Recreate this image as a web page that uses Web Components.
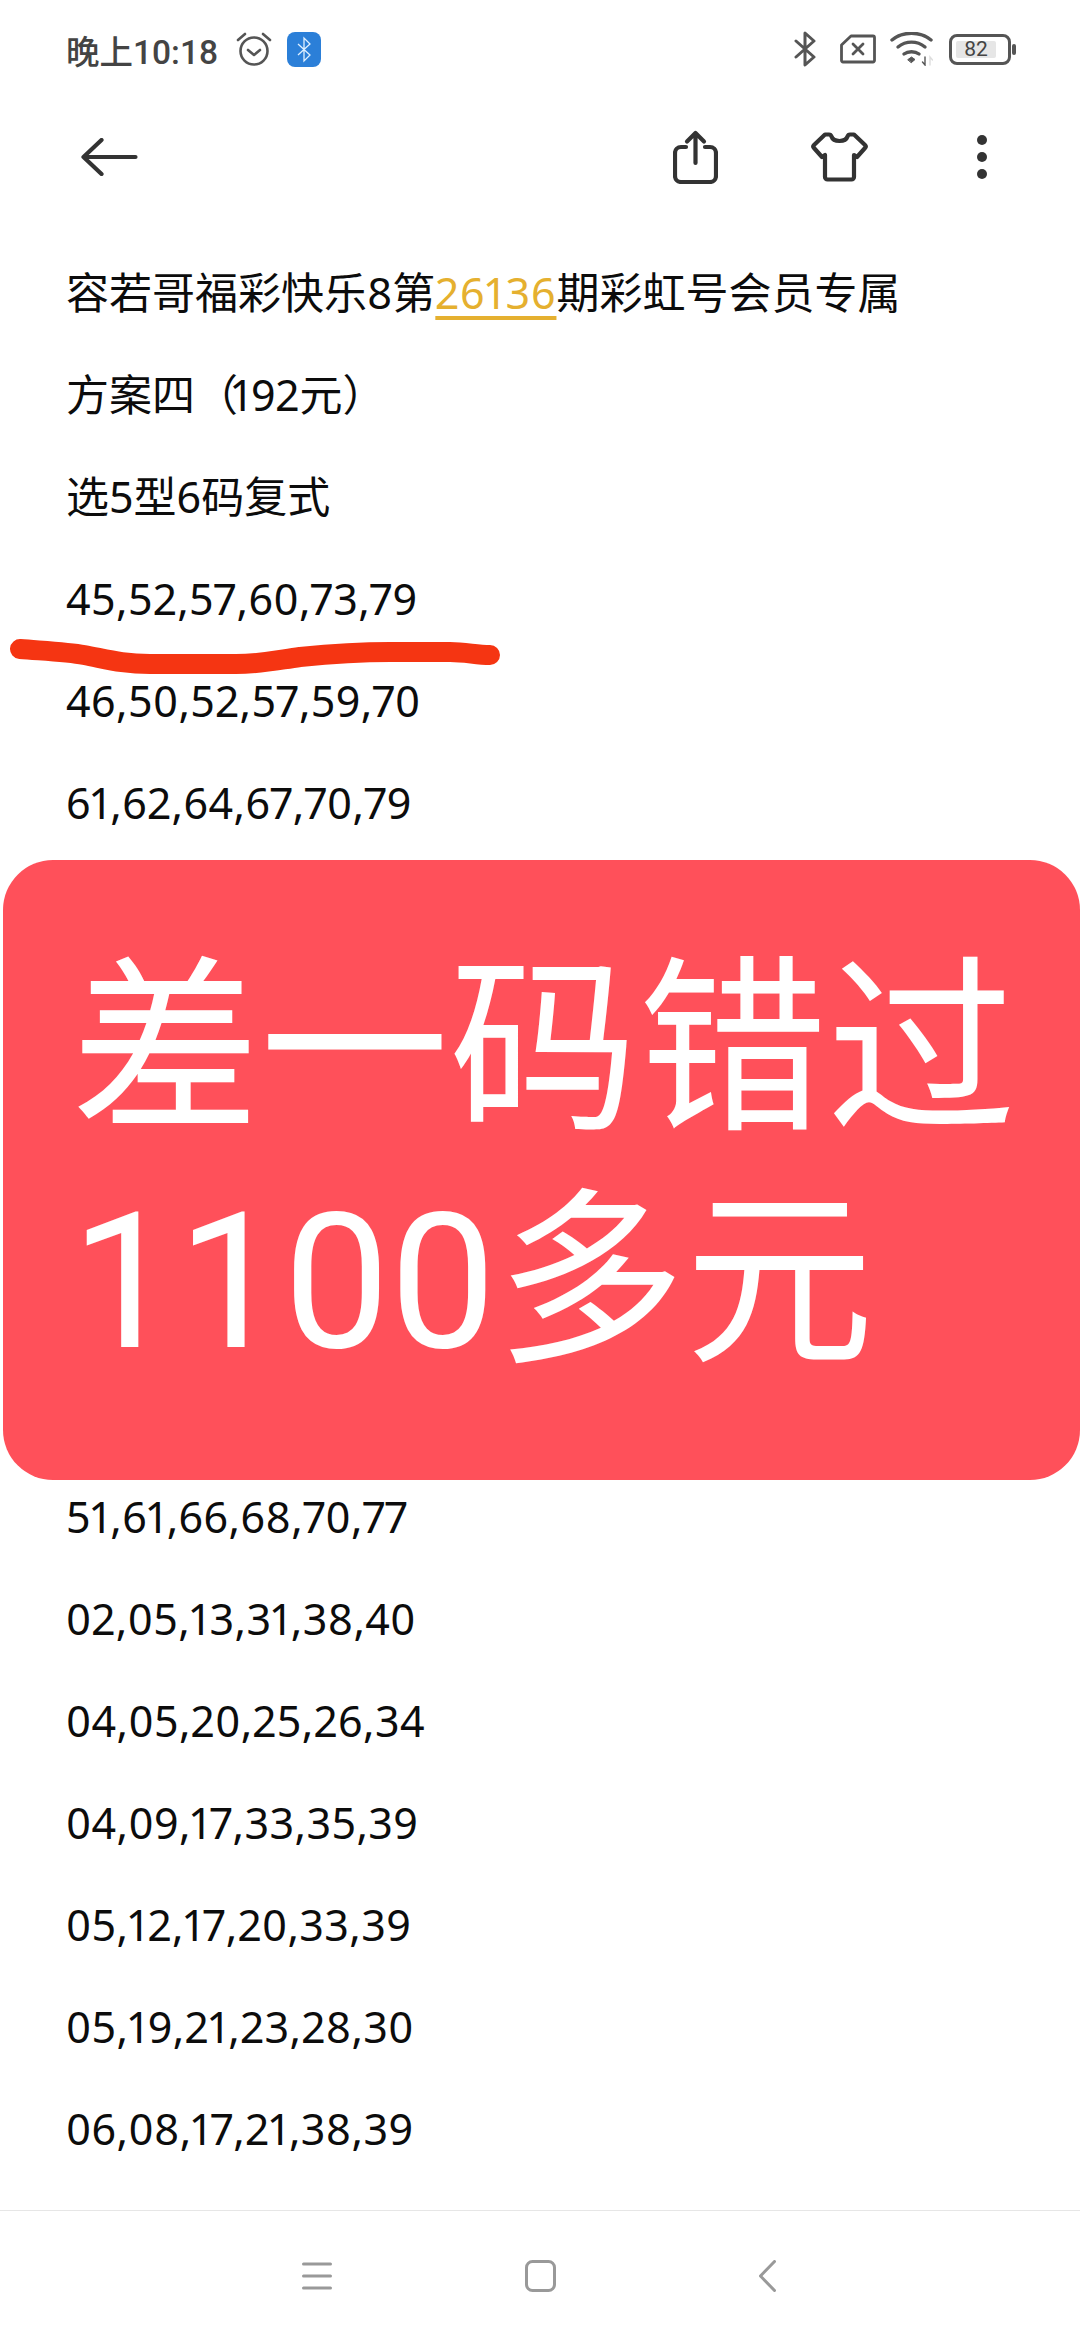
<!DOCTYPE html>
<html lang="zh">
<head>
<meta charset="utf-8">
<style>
    html, body { margin: 0; padding: 0; background: #fff; }
    body { width: 1080px; height: 2340px; overflow: hidden; position: relative; }
    note-page { height: 2340px; }
</style>
</head>
<body>
<note-page>
    <status-bar></status-bar>
    <tool-bar></tool-bar>
    <note-line>容若哥福彩快乐8第<a>26136</a>期彩虹号会员专属</note-line>
    <note-line>方案四<span>（</span>192元）</note-line>
    <note-line>选5型6码复式</note-line>
    <note-line num>45,52,57,60,73,79</note-line>
    <note-line num>46,50,52,57,59,70</note-line>
    <note-line num>61,62,64,67,70,79</note-line>
    <note-line></note-line>
    <note-line></note-line>
    <note-line></note-line>
    <note-line></note-line>
    <note-line></note-line>
    <note-line></note-line>
    <note-line num>51,61,66,68,70,77</note-line>
    <note-line num>02,05,13,31,38,40</note-line>
    <note-line num>04,05,20,25,26,34</note-line>
    <note-line num>04,09,17,33,35,39</note-line>
    <note-line num>05,12,17,20,33,39</note-line>
    <note-line num>05,19,21,23,28,30</note-line>
    <note-line num>06,08,17,21,38,39</note-line>
    <nav-bar></nav-bar>
    <red-stroke></red-stroke>
    <promo-banner>
        <span>差一码错过</span>
        <span>1100多元</span>
    </promo-banner>
</note-page>

<script>
class NotePage extends HTMLElement{
    constructor(){
        super();
        this.shadow = this.attachShadow({mode: "open"});
    }
    connectedCallback(){
        this.shadow.innerHTML = `
            <style>
                :host { display: flex; flex-direction: column; position: relative; width: 1080px; }
            </style>
            <slot></slot>
        `;
    }
}

class StatusBar extends HTMLElement{
    constructor(){
        super();
        this.shadow = this.attachShadow({mode: "open"});
    }
    connectedCallback(){
        this.shadow.innerHTML = `
            <style>
                :host {
                    display: flex;
                    align-items: center;
                    height: 98px;
                    padding: 0 0 0 66px;
                    color: #444;
                    font-family: Roboto, "Noto Sans CJK SC", sans-serif;
                    font-size: 33.5px;
                    font-weight: 500;
                }
                svg { display: block; flex: none; }
                #time { white-space: nowrap; }
                #alarm { margin-left: 18px; }
                #bt-app { margin-left: 15px; }
                #right { margin-left: auto; margin-right: 64px; display: flex; align-items: center; }
                #sim { margin-left: 24px; }
                #wifi { margin-left: 14px; }
                #battery { margin-left: 16px; }
            </style>
            <span id="time">晚上10:18</span>
            <svg id="alarm" width="36" height="36" viewBox="0 0 36 36" fill="none" stroke="#555" stroke-width="2.6" stroke-linecap="round" stroke-linejoin="round">
                <circle cx="18" cy="20" r="13.500"/>
                <path d="M12 19l6 5 6-5"/>
                <path d="M2 9 9 3M34 9l-7-6"/>
            </svg>
            <svg id="bt-app" width="34" height="35" viewBox="0 0 34 35">
                <rect width="34" height="35" rx="8" fill="#2b7fd8"/>
                <path d="M11 12l12 11-6 6V6l6 6-12 11" fill="none" stroke="#dff0ff" stroke-width="1.3"/>
            </svg>
            <div id="right">
                <svg width="22" height="36" viewBox="0 0 22 36" fill="none" stroke="#555" stroke-width="3" stroke-linejoin="round" stroke-linecap="round">
                    <path d="M2 10l18 16-9 8V2l9 8L2 26"/>
                </svg>
                <svg id="sim" width="36" height="30" viewBox="0 0 36 30" fill="none" stroke="#555" stroke-width="2.8" stroke-linejoin="round" stroke-linecap="round">
                    <path d="M11 2h22a1.500 1.500 0 0 1 1.500 1.500v23a1.500 1.500 0 0 1-1.500 1.500H3a1.500 1.500 0 0 1-1.500-1.500V11z"/>
                    <path d="M13 10l10 10M23 10L13 20"/>
                </svg>
                <svg id="wifi" width="43" height="34" viewBox="0 0 43 34" fill="none" stroke="#555" stroke-width="3.4" stroke-linecap="round">
                    <path d="M2 8c11-9 28-9 39 0"/>
                    <path d="M8 15c8-6.500 19-6.500 27 0"/>
                    <path d="M14 22c4-3 11-3 15 0"/>
                    <path d="M18 27.500 21.500 25l3.500 2.500-3.500 3z" fill="#555" stroke-width="1"/>
                    <path d="M35 25v8l-2.500-3" stroke-width="1.4"/>
                    <path d="M40 33v-8l2.500 3" stroke="#ddd" stroke-width="1.4"/>
                </svg>
                <bat-level id="battery">82</bat-level>
            </div>
        `;
    }
}

class BatLevel extends HTMLElement{
    constructor(){
        super();
        this.shadow = this.attachShadow({mode: "open"});
    }
    connectedCallback(){
        this.shadow.innerHTML = `
            <style>
                :host { display: flex; align-items: center; gap: 1px; }
                #shell {
                    box-sizing: border-box;
                    width: 62px;
                    height: 31px;
                    border: 3px solid #555;
                    border-radius: 8px;
                    padding: 4px 12px 4px 4px;
                    display: flex;
                }
                #fill {
                    flex: 1;
                    background: #e6e6e6;
                    border-radius: 2px;
                    display: flex;
                    align-items: center;
                    justify-content: center;
                    color: #444;
                    font: 400 21px/1 Roboto, sans-serif;
                }
                #cap { width: 4px; height: 11px; background: #555; border-radius: 2px; }
            </style>
            <div id="shell"><div id="fill"><slot></slot></div></div>
            <div id="cap"></div>
        `;
    }
}

class ToolBar extends HTMLElement{
    constructor(){
        super();
        this.shadow = this.attachShadow({mode: "open"});
    }
    connectedCallback(){
        this.shadow.innerHTML = `
            <style>
                :host {
                    display: flex;
                    align-items: center;
                    box-sizing: border-box;
                    height: 144px;
                    padding: 0 93px 26px 81px;
                }
                svg { display: block; flex: none; }
                #share { margin-left: auto; }
                #shirt { margin-left: 93px; }
                #more { margin-left: 109px; }
            </style>
            <svg width="57" height="38" viewBox="0 0 57 38" fill="none" stroke="#333" stroke-width="4.200" stroke-linecap="round" stroke-linejoin="round">
                <path d="M2.500 19h52M20.500 2 2.500 19l18 17"/>
            </svg>
            <svg id="share" width="45" height="54" viewBox="0 0 45 54" fill="none" stroke="#333" stroke-width="4.200" stroke-linecap="round" stroke-linejoin="round">
                <path d="M13 17H8a6 6 0 0 0-6 6v23a6 6 0 0 0 6 6h29a6 6 0 0 0 6-6V23a6 6 0 0 0-6-6h-5"/>
                <path d="M22.500 33V3M14 11.500l8.500-8.500 8.500 8.500"/>
            </svg>
            <svg id="shirt" width="57" height="50" viewBox="0 0 57 50" fill="none" stroke="#333" stroke-width="4.200" stroke-linecap="round" stroke-linejoin="round">
                <path d="M18 2.500h-4L3 13c-1 1-1 2 0 3l8 9 3-2v22a2.500 2.500 0 0 0 2.500 2.500h24a2.500 2.500 0 0 0 2.500-2.500V23l3 2 8-9c1-1 1-2 0-3L43 2.500h-4c-1 0-2 .5-2.500 2-1 3-3.500 4.500-8 4.500s-7-1.500-8-4.500c-.5-1.500-1.500-2-2.500-2z"/>
            </svg>
            <svg id="more" width="10" height="44" viewBox="0 0 10 44" fill="#333">
                <circle cx="5" cy="5" r="5"/>
                <circle cx="5" cy="22" r="5"/>
                <circle cx="5" cy="39" r="5"/>
            </svg>
        `;
    }
}

class NoteLine extends HTMLElement{
    constructor(){
        super();
        this.shadow = this.attachShadow({mode: "open"});
    }
    connectedCallback(){
        this.shadow.innerHTML = `
            <style>
                :host {
                    display: block;
                    height: 102px;
                    padding-left: 66px;
                    color: #0c0c0c;
                    font-family: "Noto Sans", "Noto Sans CJK SC", sans-serif;
                    font-size: 43px;
                    line-height: 102px;
                    white-space: nowrap;
                    font-variant-numeric: proportional-nums;
                }
                :host([num]) { letter-spacing: .4px; }
                ::slotted(a) { color: #e5b02f; letter-spacing: .9px; text-decoration: underline; text-underline-offset: 7px; }
                ::slotted(span) { letter-spacing: -6px; }
            </style>
            <slot></slot>
        `;
    }
}

class RedStroke extends HTMLElement{
    constructor(){
        super();
        this.shadow = this.attachShadow({mode: "open"});
    }
    connectedCallback(){
        this.shadow.innerHTML = `
            <style>
                :host { position: absolute; left: 0; top: 627px; width: 510px; height: 50px; display: block; }
                svg { display: block; }
            </style>
            <svg width="510" height="50" viewBox="0 0 510 50" fill="none">
                <path d="M20 22C45 24 68 25 84 28 106 32 122 37 150 37H236C262 37 278 33 300 30 330 27 360 25 390 25H450C466 25 476 28 490 28" stroke="#f53512" stroke-width="20" stroke-linecap="round"/>
            </svg>
        `;
    }
}

class PromoBanner extends HTMLElement{
    constructor(){
        super();
        this.shadow = this.attachShadow({mode: "open"});
    }
    connectedCallback(){
        this.shadow.innerHTML = `
            <style>
                :host {
                    position: absolute;
                    left: 3px;
                    top: 860px;
                    width: 1077px;
                    height: 620px;
                    box-sizing: border-box;
                    display: flex;
                    flex-direction: column;
                    padding: 75px 0 0 68px;
                    background: #ff505a;
                    border-radius: 50px;
                    color: #fff;
                    font-family: Roboto, "Noto Sans CJK SC", sans-serif;
                    font-size: 189px;
                    line-height: 232px;
                    white-space: nowrap;
                }
            </style>
            <slot></slot>
        `;
    }
}

class NavBar extends HTMLElement{
    constructor(){
        super();
        this.shadow = this.attachShadow({mode: "open"});
    }
    connectedCallback(){
        this.shadow.innerHTML = `
            <style>
                :host {
                    position: absolute;
                    left: 0;
                    right: 0;
                    top: 2210px;
                    height: 130px;
                    box-sizing: border-box;
                    border-top: 1px solid #e6e6e6;
                    display: flex;
                    align-items: center;
                }
                svg { display: block; flex: none; }
                #menu { margin-left: 302px; }
                #home { margin-left: 193px; }
                #back { margin-left: 203px; }
            </style>
            <svg id="menu" width="30" height="28" viewBox="0 0 30 28" fill="none" stroke="#999" stroke-width="3" stroke-linecap="round">
                <path d="M1.500 2h27M1.500 14h27M1.500 26h27"/>
            </svg>
            <svg id="home" width="31" height="32" viewBox="0 0 31 32" fill="none" stroke="#999" stroke-width="3">
                <rect x="1.500" y="1.500" width="28" height="29" rx="6"/>
            </svg>
            <svg id="back" width="17" height="32" viewBox="0 0 17 32" fill="none" stroke="#999" stroke-width="3" stroke-linecap="round" stroke-linejoin="round">
                <path d="M15.500 1.500 1.500 16l14 14.500"/>
            </svg>
        `;
    }
}

customElements.define('note-page', NotePage);
customElements.define('status-bar', StatusBar);
customElements.define('bat-level', BatLevel);
customElements.define('tool-bar', ToolBar);
customElements.define('note-line', NoteLine);
customElements.define('red-stroke', RedStroke);
customElements.define('promo-banner', PromoBanner);
customElements.define('nav-bar', NavBar);
</script>
</body>
</html>
